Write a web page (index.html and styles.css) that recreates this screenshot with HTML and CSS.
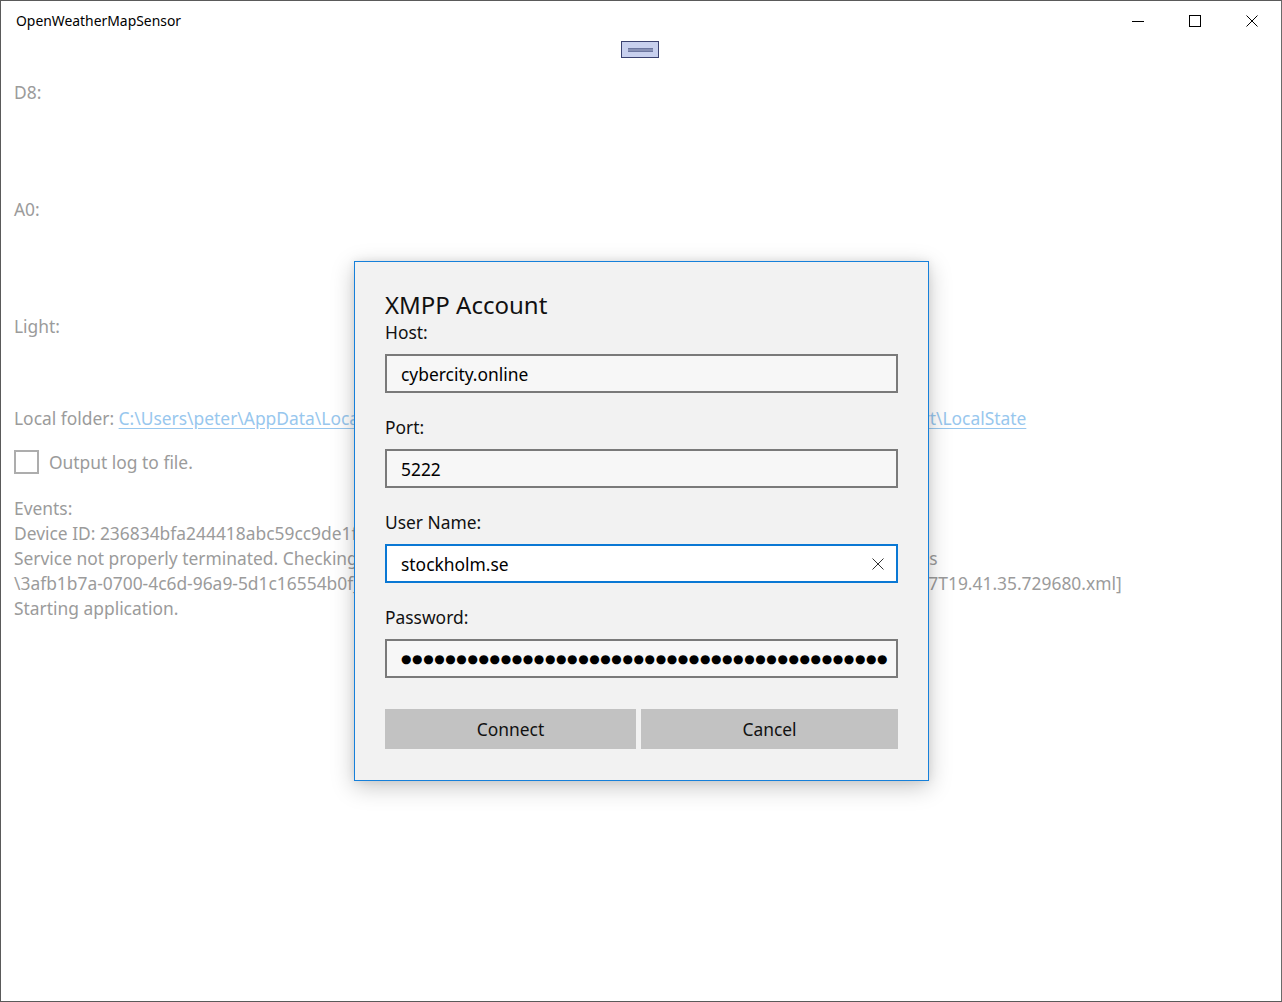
FILE: index.html
```html
<!DOCTYPE html>
<html>
<head>
<meta charset="utf-8">
<link rel="stylesheet" href="styles.css">
</head>
<body>
<div class="window">
  <div class="titlebar">
    <span class="apptitle">OpenWeatherMapSensor</span>
    <div class="controls">
      <span class="ctl"><svg width="12" height="12" viewBox="0 0 12 12"><path d="M0 6.5h12" stroke="#000" stroke-width="1"/></svg></span>
      <span class="ctl"><svg width="12" height="12" viewBox="0 0 12 12"><rect x="0.5" y="0.5" width="11" height="11" fill="none" stroke="#000" stroke-width="1"/></svg></span>
      <span class="ctl"><svg width="12" height="12" viewBox="0 0 12 12"><path d="M0.5 0.5L11.5 11.5M11.5 0.5L0.5 11.5" stroke="#000" stroke-width="1"/></svg></span>
    </div>
  </div>
  <div class="gripbar"><div class="grip"><div class="grip-lines"></div></div></div>
  <div class="content">
    <div class="sensor">D8:</div>
    <div class="sensor">A0:</div>
    <div class="sensor last">Light:</div>
    <div class="line folder">Local folder: <span class="link">C:\Users\peter\AppData\Local\Packages\3afb1b7a-0700-4c6d-96a9-5d1c16554b0f_fp1qs4rah2bkt0rt\LocalState</span></div>
    <div class="check"><span class="box"></span><span>Output log to file.</span></div>
    <div class="events">
      <div class="line">Events:</div>
      <div class="line">Device ID: 236834bfa244418abc59cc9de1f0a6e3</div>
      <div class="line">Service not properly terminated. Checking database integrity. Exporting data to C:\Users\pete\AppData\Packages</div>
      <div class="line">\3afb1b7a-0700-4c6d-96a9-5d1c16554b0f_fp1qs4rah2bkt\LocalState\Export\Database\Data\DBExport 2019-05-07T19.41.35.729680.xml]</div>
      <div class="line">Starting application.</div>
    </div>
  </div>
  <div class="dialog">
    <div class="dlg-title">XMPP Account</div>
    <label class="lbl">Host:</label>
    <div class="input">cybercity.online</div>
    <label class="lbl">Port:</label>
    <div class="input">5222</div>
    <label class="lbl">User Name:</label>
    <div class="input focus"><span>stockholm.se</span><svg class="clear" width="12" height="12" viewBox="0 0 12 12"><path d="M0.5 0.5L11.5 11.5M11.5 0.5L0.5 11.5" stroke="#333" stroke-width="1"/></svg></div>
    <label class="lbl">Password:</label>
    <div class="input pwd"><span class="dots">●●●●●●●●●●●●●●●●●●●●●●●●●●●●●●●●●●●●●●●●●●●●</span></div>
    <div class="buttons">
      <div class="btn connect">Connect</div>
      <div class="btn cancel">Cancel</div>
    </div>
  </div>
</div>
</body>
</html>
```
FILE: styles.css
```css
* { box-sizing: border-box; }
html, body { margin: 0; padding: 0; background: #fff; }
body { font-family: "Noto Sans", "Open Sans", sans-serif; }

.window {
  position: relative;
  width: 1282px;
  height: 1002px;
  border: 1px solid #5a5a5a;
  border-right-color: #6a6a6a;
  background: #fff;
  overflow: hidden;
}

.titlebar {
  height: 31px;
  display: flex;
  align-items: center;
  justify-content: space-between;
}
.apptitle {
  padding-left: 15px;
  font-size: 13.9px;
  color: #000;
  padding-top: 7px;
}
.controls { display: flex; height: 31px; }
.ctl {
  width: 57px;
  display: flex;
  align-items: center;
  justify-content: center;
  padding-top: 8px;
}
.controls .ctl:last-child { margin-right: 1px; }

.gripbar { display: flex; justify-content: center; padding-top: 9px; height: 48px; }
.grip {
  width: 38px;
  height: 17px;
  background: #c8d0ee;
  border: 1px solid #3b4270;
  display: flex;
  align-items: center;
  justify-content: center;
  margin-right: 2px;
}
.grip-lines {
  width: 25px;
  height: 4px;
  border-top: 1px solid #6c76a0;
  border-bottom: 1px solid #6c76a0;
  background: #8790b4;
}

.content {
  padding-left: 13px;
  color: #9b9b9b;
  font-size: 17.4px;
}
.sensor { height: 117px; line-height: 25px; }
.sensor.last { height: 92px; }
.line { line-height: 25px; height: 25px; white-space: nowrap; }
.link { color: #98c7ee; text-decoration: underline; text-underline-offset: 3px; }
.check {
  display: flex;
  align-items: center;
  margin-top: 18px;
  height: 25px;
  gap: 10px;
}
.box {
  width: 25px;
  height: 24px;
  border: 2px solid #adadad;
  display: inline-block;
}
.events { margin-top: 22px; }

.dialog {
  position: absolute;
  left: 353px;
  top: 260px;
  width: 575px;
  height: 520px;
  background: #f2f2f2;
  border: 1px solid #1680da;
  box-shadow: 0 6px 22px rgba(0, 0, 0, 0.22), 0 0 8px rgba(0, 0, 0, 0.08);
  padding: 26px 30px 0 30px;
  color: #000;
  display: flex;
  flex-direction: column;
}
.dlg-title {
  font-size: 24px;
  line-height: 33px;
  height: 32px;
  color: #111;
}
.lbl {
  display: block;
  font-size: 17.4px;
  line-height: 25px;
  height: 25px;
  margin-bottom: 9px;
  color: #111;
}
.input {
  height: 39px;
  border: 2px solid #7a7a7a;
  background: #f7f7f7;
  padding: 0 14px;
  display: flex;
  align-items: center;
  justify-content: space-between;
  font-size: 17.4px;
  margin-bottom: 22px;
  color: #000;
}
.input.focus { border-color: #0a78d4; background: #fff; padding-right: 12px; }
.input.pwd { margin-bottom: 31px; overflow: hidden; padding-left: 14px; }
.dots {
  font-family: "DejaVu Sans", sans-serif;
  font-size: 12px;
  letter-spacing: 0.6px;
  white-space: nowrap;
  color: #000;
}
.buttons { display: flex; gap: 5px; height: 40px; }
.btn {
  background: #c2c2c2;
  display: flex;
  align-items: center;
  justify-content: center;
  font-size: 17.4px;
  color: #111;
}
.btn.connect { width: 251px; }
.btn.cancel { width: 257px; }
```
